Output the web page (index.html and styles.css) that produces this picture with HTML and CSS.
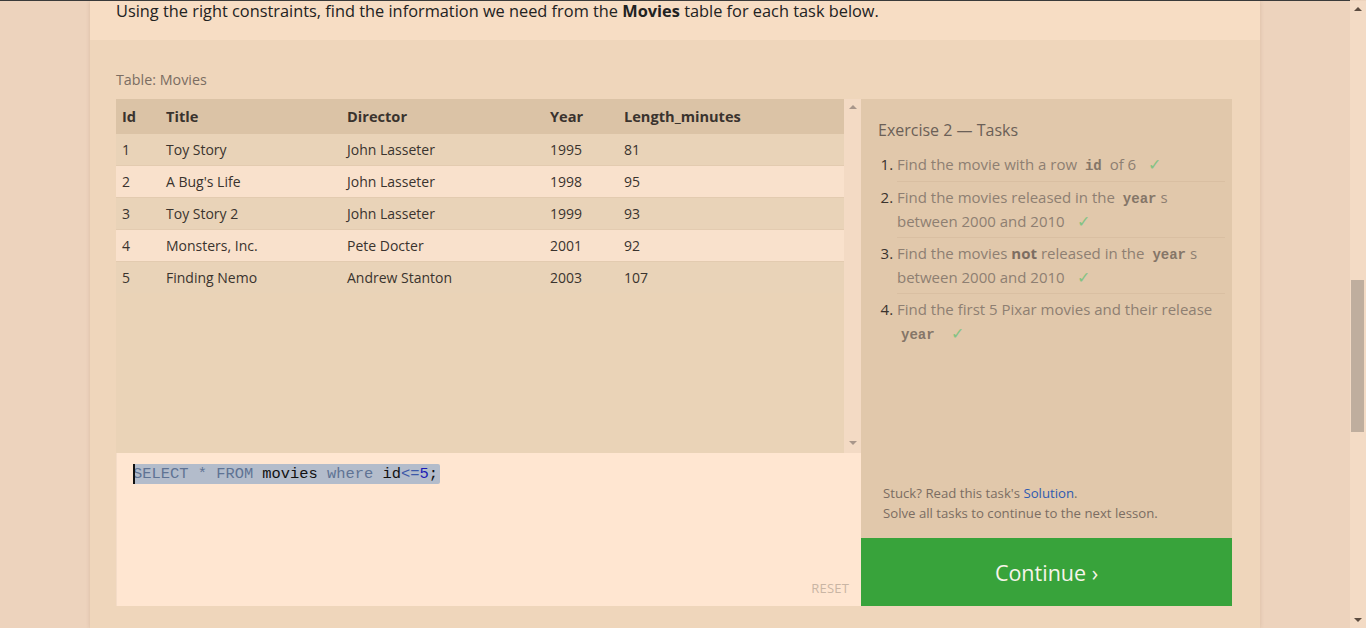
FILE: index.html
```html
<!DOCTYPE html>
<html lang="en">
<head>
<meta charset="utf-8">
<title>SQL Lesson 2</title>
<link rel="stylesheet" href="styles.css">
</head>
<body>
<div class="page">
  <div class="intro">
    <p>Using the right constraints, find the information we need from the <strong>Movies</strong> table for each task below.</p>
  </div>
  <div class="exercise">
    <div class="table-label">Table: Movies</div>
    <div class="workspace">
      <div class="left">
        <div class="table-view">
          <div class="table-scroll">
            <table class="movies">
              <thead>
                <tr><th class="c-id">Id</th><th class="c-title">Title</th><th class="c-dir">Director</th><th class="c-year">Year</th><th>Length_minutes</th></tr>
              </thead>
              <tbody>
                <tr><td>1</td><td>Toy Story</td><td>John Lasseter</td><td>1995</td><td>81</td></tr>
                <tr><td>2</td><td>A Bug's Life</td><td>John Lasseter</td><td>1998</td><td>95</td></tr>
                <tr><td>3</td><td>Toy Story 2</td><td>John Lasseter</td><td>1999</td><td>93</td></tr>
                <tr><td>4</td><td>Monsters, Inc.</td><td>Pete Docter</td><td>2001</td><td>92</td></tr>
                <tr><td>5</td><td>Finding Nemo</td><td>Andrew Stanton</td><td>2003</td><td>107</td></tr>
              </tbody>
            </table>
          </div>
          <div class="vscroll">
            <span class="arrow up"></span>
            <span class="arrow down"></span>
          </div>
        </div>
        <div class="editor">
          <div class="code"><span class="cursor"></span><span class="sel"><span class="kw">SELECT</span> <span class="kw">*</span> <span class="kw">FROM</span> movies <span class="kw">where</span> id<span class="op">&lt;=</span><span class="num">5</span>;</span></div>
          <div class="reset">RESET</div>
        </div>
      </div>
      <div class="right">
        <div class="tasks">
          <h3 class="tasks-title">Exercise 2 — Tasks</h3>
          <ol class="task-list">
            <li>Find the movie with a row <code>id</code> of 6 <span class="check">✓</span></li>
            <li>Find the movies released in the <code>year</code>s between 2000 and 2010 <span class="check">✓</span></li>
            <li>Find the movies <strong>not</strong> released in the <code>year</code>s between 2000 and 2010 <span class="check">✓</span></li>
            <li>Find the first 5 Pixar movies and their release <code>year</code> <span class="check">✓</span></li>
          </ol>
          <div class="hint">
            <p>Stuck? Read this task's <a href="#">Solution</a>.</p>
            <p>Solve all tasks to continue to the next lesson.</p>
          </div>
        </div>
        <a class="continue" href="#">Continue ›</a>
      </div>
    </div>
  </div>
</div>
<div class="page-scroll">
  <span class="parrow pup"></span>
  <span class="thumb"></span>
  <span class="parrow pdown"></span>
</div>
</body>
</html>
```
FILE: styles.css
```css
html, body {
  margin: 0;
  padding: 0;
  height: 100%;
  overflow: hidden;
}
body {
  background: #edd3bd;
  font-family: "Open Sans", "Noto Sans", sans-serif;
  color: #333;
  border-top: 1px solid #3a3a3a;
  box-sizing: border-box;
  margin-right: 16px;
}
.page {
  width: 1170px;
  margin: 0 auto;
  height: 100%;
  box-shadow: 0 0 4px rgba(120, 80, 50, 0.18);
  display: flex;
  flex-direction: column;
}
.intro {
  background: #f7ddc4;
  height: 39px;
  padding: 0 26px;
  box-sizing: border-box;
}
.intro p {
  margin: 0;
  font-size: 16.35px;
  line-height: 21px;
  color: #222;
}
.intro strong { font-weight: 700; }
.exercise {
  background: #efd6bb;
  flex: 1;
  padding: 29px 28px 0 26px;
}
.table-label {
  font-size: 14.3px;
  color: #7b6d62;
  line-height: 22px;
  margin-bottom: 8px;
}
.workspace {
  display: flex;
  height: 507px;
}
.left {
  width: 745px;
  display: flex;
  flex-direction: column;
}
.table-view {
  height: 354px;
  display: flex;
  background: #ead3b7;
}
.table-scroll {
  flex: 1;
}
.vscroll {
  width: 17px;
  background: #f3dac4;
  display: flex;
  flex-direction: column;
  justify-content: space-between;
  align-items: center;
  padding: 6px 0 8px;
  box-sizing: border-box;
}
.arrow {
  width: 0;
  height: 0;
  border-left: 4px solid transparent;
  border-right: 4px solid transparent;
}
.arrow.up { border-bottom: 4px solid #a8968a; }
.arrow.down { border-top: 4px solid #a8968a; }
table.movies {
  width: 100%;
  border-collapse: collapse;
  font-size: 14px;
}
.movies th {
  background: #dbc3a6;
  text-align: left;
  font-weight: 700;
  font-size: 14.6px;
  height: 34px;
  padding: 0 6px 1px;
  color: #3a332e;
}
.movies td {
  height: 31px;
  padding: 0 6px;
  border-bottom: 1px solid #e3cbb0;
  color: #3a332e;
}
.movies tbody tr:last-child td { border-bottom: none; }
.movies tbody tr:nth-child(odd) td { background: #e9d3b8; }
.movies tbody tr:nth-child(even) td { background: #f9e1cc; }
.movies .c-id { width: 32px; }
.movies .c-title { width: 169px; }
.movies .c-dir { width: 191px; }
.movies .c-year { width: 62px; }
.editor {
  flex: 1;
  background: #ffe6d1;
  border-left: 1px solid #f4dcc7;
  position: relative;
  padding: 11px 16px 9px;
}
.code {
  font-family: "Liberation Mono", "DejaVu Sans Mono", monospace;
  font-size: 15.4px;
  line-height: 20px;
  color: #111;
  display: flex;
  align-items: center;
}
.cursor {
  display: inline-block;
  width: 2px;
  height: 20px;
  background: #111;
  margin-right: -2px;
  position: relative;
  z-index: 1;
}
.sel {
  background: #b3bccb;
  border-radius: 2px;
  white-space: pre;
  padding-right: 2px;
}
.kw { color: #5f7394; }
.op { color: #3d59a8; }
.num { color: #1b1bb5; }
.reset {
  position: absolute;
  right: 12px;
  bottom: 9px;
  font-size: 13px;
  color: #c9b5a4;
  letter-spacing: 0.2px;
}
.right {
  width: 371px;
  display: flex;
  flex-direction: column;
}
.tasks {
  flex: 1;
  background: #e1c8ab;
  padding: 20px 7px 15px 17px;
  display: flex;
  flex-direction: column;
}
.tasks-title {
  margin: 0 0 11px;
  font-weight: 400;
  font-size: 16px;
  line-height: 22px;
  color: #6b6057;
}
.task-list {
  margin: 0;
  padding: 0 0 0 19px;
  font-size: 15px;
  line-height: 24px;
  color: #8e7f72;
}
.task-list li {
  padding: 3px 0 4px;
  border-bottom: 1px solid #d9bfa2;
}
.task-list li:first-child { padding-top: 0; padding-bottom: 5px; }
.task-list li:last-child { border-bottom: none; }
.task-list li::marker { color: #3a332e; }
.task-list code {
  font-family: "Liberation Mono", "DejaVu Sans Mono", monospace;
  font-weight: 700;
  font-size: 14px;
  line-height: 0;
  padding: 0 4px;
  color: #857668;
}
.task-list strong { color: #7d6e62; }
.check {
  color: #84c384;
  font-size: 16px;
  line-height: 0;
  margin-left: 8px;
}
.hint {
  margin-top: auto;
  padding-left: 5px;
  font-size: 13.2px;
  line-height: 20px;
  color: #7b6d62;
}
.hint p { margin: 0; }
.hint a { color: #2f5bb0; text-decoration: none; }
.continue {
  height: 68px;
  background: #38a33b;
  color: #f7f4ea;
  font-size: 21.5px;
  display: flex;
  align-items: center;
  justify-content: center;
  text-decoration: none;
}
.page-scroll {
  position: fixed;
  top: 1px;
  right: 0;
  bottom: 0;
  width: 16px;
  background: #f3dbc5;
}
.thumb {
  position: absolute;
  left: 1px;
  right: 2px;
  top: 279px;
  height: 152px;
  background: #bfae9e;
}
.parrow {
  position: absolute;
  left: 4px;
  width: 0;
  height: 0;
  border-left: 4px solid transparent;
  border-right: 4px solid transparent;
}
.pup { top: 6px; border-bottom: 4px solid #5c4c40; }
.pdown { bottom: 6px; border-top: 4px solid #5c4c40; }
```
